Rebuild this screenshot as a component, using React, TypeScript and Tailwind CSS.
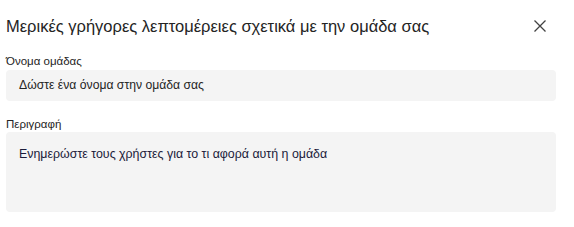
export default function App() {
  return (
    <div className="w-[574px] h-[227px] bg-white px-[6px] text-[#242424] font-['Liberation_Sans',sans-serif]">
      <div className="flex items-center justify-between h-[52px]">
        <h1 className="text-[16.5px] leading-[22px] font-normal">
          Μερικές γρήγορες λεπτομέρειες σχετικά με την ομάδα σας
        </h1>
        <button className="w-[12px] h-[12px] mr-[22px] flex items-center justify-center text-[#424242]">
          <svg width="12" height="12" viewBox="0 0 12 12" fill="none" stroke="currentColor" strokeWidth="1.3">
            <path d="M0.5 0.5L11.5 11.5M11.5 0.5L0.5 11.5" />
          </svg>
        </button>
      </div>
      <div className="h-[18px] flex items-center text-[11.5px] leading-[16px]">Όνομα ομάδας</div>
      <div className="w-[550px] h-[31px] rounded-[4px] bg-[#f4f4f4] flex items-center px-[13px] text-[12.2px]">
        Δώστε ένα όνομα στην ομάδα σας
      </div>
      <div className="mt-[14px] h-[17px] flex items-center text-[11.5px] leading-[16px]">Περιγραφή</div>
      <div className="w-[550px] h-[80px] rounded-[4px] bg-[#f4f4f4] px-[13px] pt-[13px] text-[12.4px] leading-[18px] text-[#1b1b3a]">
        Ενημερώστε τους χρήστες για το τι αφορά αυτή η ομάδα
      </div>
    </div>
  );
}
